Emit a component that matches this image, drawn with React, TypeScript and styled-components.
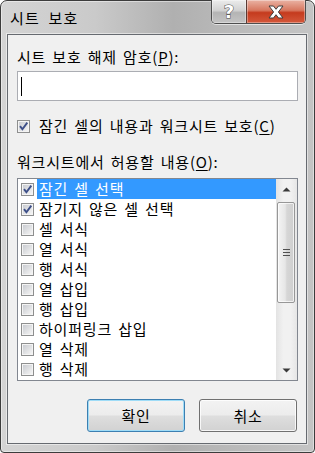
import React from "react";
import styled, { createGlobalStyle } from "styled-components";

const Global = createGlobalStyle`
  html, body { margin: 0; padding: 0; background: #ffffff; }
  body { font-family: "Noto Sans CJK KR", "Noto Sans", sans-serif; color: #000; }
  * { box-sizing: border-box; }
`;

const FONT = `"Noto Sans CJK KR", "Noto Sans", sans-serif`;

const Window = styled.div`
  width: 315px;
  height: 453px;
  display: flex;
  flex-direction: column;
  border: 1px solid #3c3c3c;
  border-radius: 7px 7px 4px 4px;
  background: linear-gradient(90deg, #d4d4d4 0%, #cacaca 30%, #b0b0b0 55%, #bababa 75%, #c4c4c4 100%);
  padding: 0 7px 8px 6px;
  box-shadow: inset 0 0 0 1px rgba(255, 255, 255, 0.45);
`;

const TitleBar = styled.div`
  height: 33px;
  display: flex;
  align-items: flex-start;
  justify-content: space-between;
`;

const Title = styled.div`
  font-family: ${FONT};
  font-size: 15px;
  line-height: 18px;
  letter-spacing: 1.2px;
  word-spacing: 4px;
  margin: 8px 0 0 3px;
  color: #000;
`;

const Caption = styled.div`
  display: flex;
  height: 24px;
  margin-top: -1px;
  margin-right: 1px;
  border: 1px solid #4e4e4e;
  border-top: none;
  border-radius: 0 0 5px 5px;
  overflow: hidden;
  box-shadow: 0 1px 0 rgba(255, 255, 255, 0.6);
`;

const CapButton = styled.div<{ $kind: "help" | "close" }>`
  width: ${(p) => (p.$kind === "help" ? "34px" : "59px")};
  height: 100%;
  display: flex;
  align-items: center;
  justify-content: center;
  border-left: ${(p) => (p.$kind === "close" ? "1px solid #5a3a34" : "none")};
  background: ${(p) =>
    p.$kind === "help"
      ? "linear-gradient(180deg, #ececec 0%, #d2d2d2 45%, #b4b4b4 55%, #c4c4c4 100%)"
      : "linear-gradient(180deg, #eab3a4 0%, #d7775f 45%, #c53b1e 55%, #d4583b 100%)"};
  box-shadow: inset 0 0 0 1px rgba(255, 255, 255, 0.35);
`;

const HelpGlyph = styled.span`
  font-family: "DejaVu Sans", sans-serif;
  font-weight: bold;
  font-size: 18px;
  line-height: 18px;
  color: #ffffff;
  -webkit-text-stroke: 1px #4a4a4a;
  paint-order: stroke fill;
  margin-top: 1px;
`;

const Client = styled.div`
  flex: 1;
  display: flex;
  flex-direction: column;
  background: #f0f0f0;
  border: 1px solid #666a70;
  padding: 13px 8px 11px 9px;
  font-family: ${FONT};
  font-size: 15px;
  letter-spacing: 0.8px;
  word-spacing: 2px;
  box-shadow: 0 0 0 1px rgba(255, 255, 255, 0.5);
`;

const Label = styled.div<{ $gap?: number }>`
  font-size: 15px;
  line-height: 18px;
  height: 18px;
  margin-top: ${(p) => p.$gap ?? 0}px;
  white-space: nowrap;
`;

const Key = styled.span`
  text-decoration: underline;
  text-underline-offset: 2px;
`;

const TextInput = styled.div`
  margin-top: 5px;
  height: 30px;
  background: #ffffff;
  border: 1px solid #abadb3;
  display: flex;
  align-items: center;
  padding-left: 3px;
`;

const Caret = styled.span`
  width: 1px;
  height: 19px;
  background: #000;
`;

const CheckRow = styled.div`
  margin-top: 16px;
  height: 18px;
  display: flex;
  align-items: center;
  gap: 9px;
  font-size: 15px;
  line-height: 18px;
  white-space: nowrap;
`;

const Box = styled.span`
  width: 13px;
  height: 13px;
  flex: none;
  border: 1px solid #8e8f8f;
  background: #f4f4f4;
  padding: 1px;
  display: flex;
`;

const BoxInner = styled.span`
  flex: 1;
  background: linear-gradient(135deg, #c9ccd1 0%, #e3e4e6 60%, #f4f4f4 100%);
  position: relative;
`;

const CheckSvg = styled.svg`
  position: absolute;
  left: -1px;
  top: -1px;
`;

function CheckBox({ checked }: { checked: boolean }) {
  return (
    <Box>
      <BoxInner>
        {checked && (
          <CheckSvg width="11" height="11" viewBox="0 0 11 11">
            <path d="M2 5.2 L4.4 8.2 L9.3 1.6" fill="none" stroke="#3d4f88" strokeWidth="1.9" />
          </CheckSvg>
        )}
      </BoxInner>
    </Box>
  );
}

const ListBox = styled.div`
  margin-top: 7px;
  height: 203px;
  border: 1px solid #828790;
  background: #ffffff;
  display: flex;
`;

const Items = styled.div`
  flex: 1;
  display: flex;
  flex-direction: column;
`;

const Item = styled.div`
  height: 20px;
  display: flex;
  align-items: center;
  padding-left: 3px;
`;

const ItemText = styled.span<{ $selected?: boolean }>`
  flex: 1;
  margin-left: 3px;
  padding-left: 2px;
  height: 20px;
  line-height: 20px;
  font-size: 15px;
  white-space: nowrap;
  background: ${(p) => (p.$selected ? "#3399ff" : "transparent")};
  color: ${(p) => (p.$selected ? "#ffffff" : "#000000")};
`;

const ScrollBar = styled.div`
  width: 21px;
  display: flex;
  flex-direction: column;
  background: linear-gradient(90deg, #e3e3e3 0%, #f1f1f1 35%, #f1f1f1 70%, #e6e6e6 100%);
`;

const ArrowBtn = styled.div`
  height: 20px;
  display: flex;
  align-items: center;
  justify-content: center;
`;

const Track = styled.div`
  flex: 1;
  display: flex;
  flex-direction: column;
  padding: 3px 2px 0 1px;
`;

const Thumb = styled.div`
  height: 101px;
  border: 1px solid #979797;
  border-radius: 2px;
  background: linear-gradient(90deg, #f4f4f4 0%, #e6e6e6 45%, #d6d6d6 55%, #cfcfcf 100%);
  box-shadow: inset 0 0 0 1px rgba(255, 255, 255, 0.7);
  display: flex;
  align-items: center;
  justify-content: center;
`;

const ButtonRow = styled.div`
  margin-top: 18px;
  display: flex;
  justify-content: flex-end;
  gap: 14px;
  padding-right: 1px;
`;

const Button = styled.div<{ $default?: boolean }>`
  width: 98px;
  height: 33px;
  border-radius: 3px;
  border: 1px solid ${(p) => (p.$default ? "#3c7fb1" : "#707070")};
  background: linear-gradient(180deg, #f3f3f3 0%, #ececec 48%, #dedede 52%, #d2d2d2 100%);
  box-shadow: inset 0 0 0 1px ${(p) => (p.$default ? "#9fdcf7" : "rgba(255,255,255,0.8)")};
  display: flex;
  align-items: center;
  justify-content: center;
  font-size: 15px;
  line-height: 18px;
`;

const items = [
  { t: "잠긴 셀 선택", c: true, s: true },
  { t: "잠기지 않은 셀 선택", c: true },
  { t: "셀 서식" },
  { t: "열 서식" },
  { t: "행 서식" },
  { t: "열 삽입" },
  { t: "행 삽입" },
  { t: "하이퍼링크 삽입" },
  { t: "열 삭제" },
  { t: "행 삭제" },
];

export default function App() {
  return (
    <>
      <Global />
      <Window>
        <TitleBar>
          <Title>시트 보호</Title>
          <Caption>
            <CapButton $kind="help">
              <HelpGlyph>?</HelpGlyph>
            </CapButton>
            <CapButton $kind="close">
              <svg width="18" height="14" viewBox="0 0 18 14">
                <path
                  d="M2 1 H6.5 L9 4.3 L11.5 1 H16 L11.4 7 L16 13 H11.5 L9 9.7 L6.5 13 H2 L6.6 7 Z"
                  fill="#ffffff"
                  stroke="#3e3e3e"
                  strokeWidth="1"
                  strokeLinejoin="round"
                />
              </svg>
            </CapButton>
          </Caption>
        </TitleBar>
        <Client>
          <Label>
            시트 보호 해제 암호(<Key>P</Key>):
          </Label>
          <TextInput>
            <Caret />
          </TextInput>
          <CheckRow>
            <CheckBox checked />
            <span>
              잠긴 셀의 내용과 워크시트 보호(<Key>C</Key>)
            </span>
          </CheckRow>
          <Label $gap={18}>
            워크시트에서 허용할 내용(<Key>O</Key>):
          </Label>
          <ListBox>
            <Items>
              {items.map((it) => (
                <Item key={it.t}>
                  <CheckBox checked={!!it.c} />
                  <ItemText $selected={!!it.s}>{it.t}</ItemText>
                </Item>
              ))}
            </Items>
            <ScrollBar>
              <ArrowBtn>
                <svg width="9" height="5" viewBox="0 0 9 5">
                  <path d="M0.5 4.5 L4.5 0.5 L8.5 4.5 Z" fill="#3a3a3a" />
                </svg>
              </ArrowBtn>
              <Track>
                <Thumb>
                  <svg width="7" height="7" viewBox="0 0 7 7">
                    <path d="M0 0.5 H7 M0 3.5 H7 M0 6.5 H7" stroke="#505050" strokeWidth="1" />
                  </svg>
                </Thumb>
              </Track>
              <ArrowBtn>
                <svg width="9" height="5" viewBox="0 0 9 5">
                  <path d="M0.5 0.5 L4.5 4.5 L8.5 0.5 Z" fill="#3a3a3a" />
                </svg>
              </ArrowBtn>
            </ScrollBar>
          </ListBox>
          <ButtonRow>
            <Button $default>확인</Button>
            <Button>취소</Button>
          </ButtonRow>
        </Client>
      </Window>
    </>
  );
}
